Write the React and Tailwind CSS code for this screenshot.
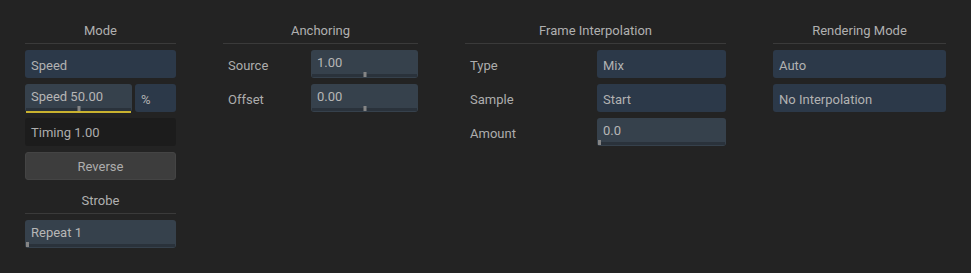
import React from "react";

const font = { fontFamily: "Roboto, 'Noto Sans', sans-serif" };

function Title({ children }) {
  return (
    <div className="h-[28px] border-b border-[#3a3a3a] flex items-end justify-center pb-[3px] text-[13px] text-[#b0b0b0]">
      {children}
    </div>
  );
}

function Dropdown({ children, className = "" }) {
  return (
    <div className={"h-[28px] rounded-[3px] bg-[#2c3949] flex items-center pl-[6px] pt-[3px] text-[13px] text-[#b2b2b2] " + className}>
      {children}
    </div>
  );
}

function Slider({ children, pos = "center", className = "", yellow = false }) {
  return (
    <div className={"relative h-[28px] rounded-[3px] bg-[#36414c] flex flex-col " + className}>
      <div className="flex-1 flex items-center pl-[6px] text-[13px] text-[#b6b6b6] pt-[1px]">{children}</div>
      <div className="relative mx-[1px] mb-[1px] h-[3px] bg-[#2a323b]">
        <div
          className={
            "absolute bottom-0 w-[3px] h-[5px] bg-[#858585] " +
            (pos === "center" ? "left-1/2 -translate-x-1/2" : "left-0")
          }
        />
      </div>
      {yellow && <div className="absolute left-[1px] right-[1px] -bottom-[1px] h-[2px] bg-[#c9b22f]" />}
    </div>
  );
}

function Row({ label, children, labelW }) {
  return (
    <div className="flex items-center h-[28px]">
      <div className={"pl-[5px] pt-[3px] text-[13px] text-[#adadad] " + labelW}>{label}</div>
      <div className="flex-1">{children}</div>
    </div>
  );
}

export default function App() {
  return (
    <div style={font} className="w-[971px] h-[273px] bg-[#232323] px-[25px] pt-[16px] flex gap-[47px]">
      <div className="w-[151px] flex flex-col gap-[6px]">
        <Title>Mode</Title>
        <Dropdown>Speed</Dropdown>
        <div className="flex gap-[3px]">
          <Slider yellow className="w-[107px]">Speed 50.00</Slider>
          <Dropdown className="flex-1">%</Dropdown>
        </div>
        <div className="h-[28px] rounded-[3px] bg-[#1c1c1c] flex items-center pl-[6px] pt-[2px] text-[13px] text-[#adadad]">
          Timing 1.00
        </div>
        <div className="h-[28px] rounded-[3px] bg-[#3d3d3d] border border-[#444] flex items-center justify-center pt-[2px] text-[13px] text-[#adadad]">
          Reverse
        </div>
        <Title>Strobe</Title>
        <Slider pos="left">Repeat 1</Slider>
      </div>

      <div className="w-[195px] flex flex-col gap-[6px]">
        <Title>Anchoring</Title>
        <Row label="Source" labelW="w-[88px]">
          <Slider>1.00</Slider>
        </Row>
        <Row label="Offset" labelW="w-[88px]">
          <Slider>0.00</Slider>
        </Row>
      </div>

      <div className="w-[261px] flex flex-col gap-[6px]">
        <Title>Frame Interpolation</Title>
        <Row label="Type" labelW="w-[132px]">
          <Dropdown>Mix</Dropdown>
        </Row>
        <Row label="Sample" labelW="w-[132px]">
          <Dropdown>Start</Dropdown>
        </Row>
        <Row label="Amount" labelW="w-[132px]">
          <Slider pos="left">0.0</Slider>
        </Row>
      </div>

      <div className="w-[173px] flex flex-col gap-[6px]">
        <Title>Rendering Mode</Title>
        <Dropdown>Auto</Dropdown>
        <Dropdown>No Interpolation</Dropdown>
      </div>
    </div>
  );
}
